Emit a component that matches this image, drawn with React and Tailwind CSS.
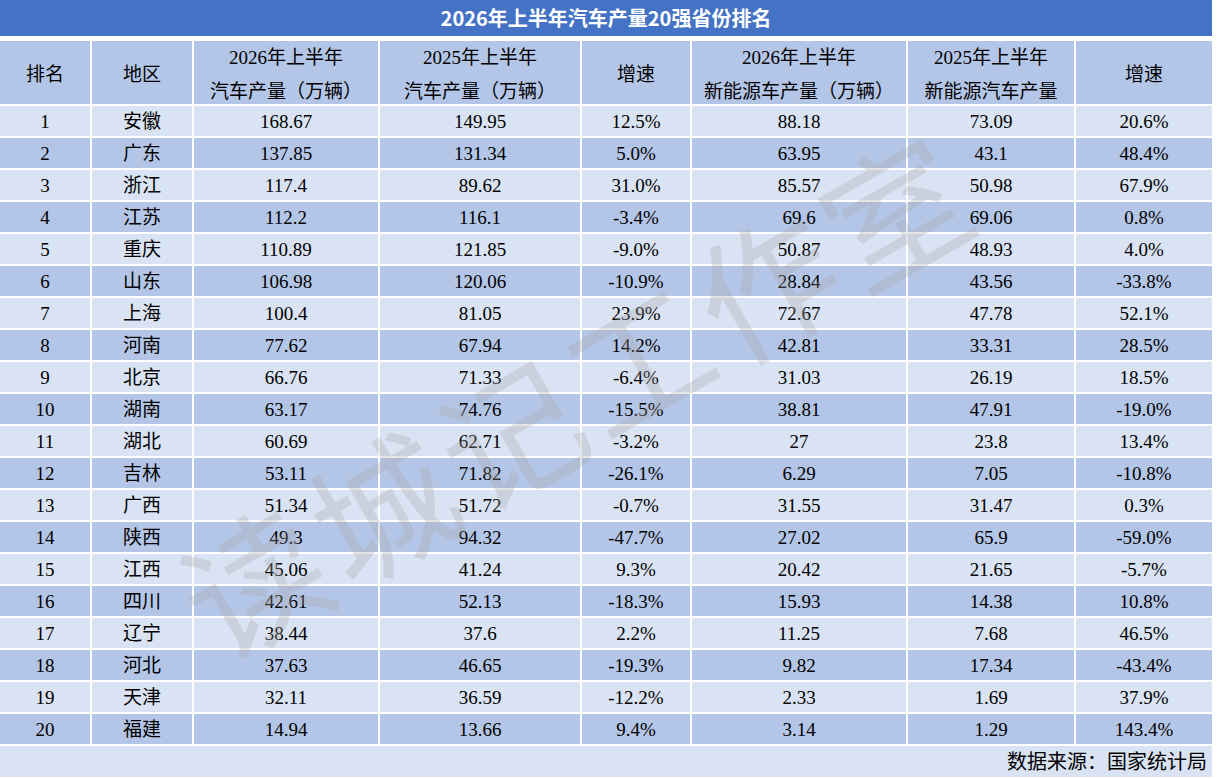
import React from "react";

const rows = [
  ["1", "安徽", "168.67", "149.95", "12.5%", "88.18", "73.09", "20.6%"],
  ["2", "广东", "137.85", "131.34", "5.0%", "63.95", "43.1", "48.4%"],
  ["3", "浙江", "117.4", "89.62", "31.0%", "85.57", "50.98", "67.9%"],
  ["4", "江苏", "112.2", "116.1", "-3.4%", "69.6", "69.06", "0.8%"],
  ["5", "重庆", "110.89", "121.85", "-9.0%", "50.87", "48.93", "4.0%"],
  ["6", "山东", "106.98", "120.06", "-10.9%", "28.84", "43.56", "-33.8%"],
  ["7", "上海", "100.4", "81.05", "23.9%", "72.67", "47.78", "52.1%"],
  ["8", "河南", "77.62", "67.94", "14.2%", "42.81", "33.31", "28.5%"],
  ["9", "北京", "66.76", "71.33", "-6.4%", "31.03", "26.19", "18.5%"],
  ["10", "湖南", "63.17", "74.76", "-15.5%", "38.81", "47.91", "-19.0%"],
  ["11", "湖北", "60.69", "62.71", "-3.2%", "27", "23.8", "13.4%"],
  ["12", "吉林", "53.11", "71.82", "-26.1%", "6.29", "7.05", "-10.8%"],
  ["13", "广西", "51.34", "51.72", "-0.7%", "31.55", "31.47", "0.3%"],
  ["14", "陕西", "49.3", "94.32", "-47.7%", "27.02", "65.9", "-59.0%"],
  ["15", "江西", "45.06", "41.24", "9.3%", "20.42", "21.65", "-5.7%"],
  ["16", "四川", "42.61", "52.13", "-18.3%", "15.93", "14.38", "10.8%"],
  ["17", "辽宁", "38.44", "37.6", "2.2%", "11.25", "7.68", "46.5%"],
  ["18", "河北", "37.63", "46.65", "-19.3%", "9.82", "17.34", "-43.4%"],
  ["19", "天津", "32.11", "36.59", "-12.2%", "2.33", "1.69", "37.9%"],
  ["20", "福建", "14.94", "13.66", "9.4%", "3.14", "1.29", "143.4%"],
];

const headers = [
  ["排名"],
  ["地区"],
  ["2026年上半年", "汽车产量（万辆）"],
  ["2025年上半年", "汽车产量（万辆）"],
  ["增速"],
  ["2026年上半年", "新能源车产量（万辆）"],
  ["2025年上半年", "新能源汽车产量"],
  ["增速"],
];

const serif = {
  fontFamily: '"Liberation Serif", "Noto Sans CJK SC", serif',
};

export default function App() {
  return (
    <div className="relative w-[1218px] h-[778px] bg-white overflow-hidden">
      <div
        className="w-[1212px] flex flex-col text-[19px] text-black"
        style={serif}
      >
        <div
          className="h-[36px] bg-[#4472c4] flex items-center justify-center text-white font-bold text-[20px]"
          style={{ fontFamily: '"Noto Sans CJK SC", "Noto Sans", sans-serif' }}
        >
          2026年上半年汽车产量20强省份排名
        </div>
        <div className="mt-[5px] grid grid-cols-[90px_100px_184px_200px_108px_214px_166px_136px] gap-[2px]">
          {headers.map((h, i) => (
            <div
              key={"h" + i}
              className="h-[63px] bg-[#b4c6e7] flex flex-col items-center justify-center pt-[5px] gap-[4px] whitespace-nowrap"
            >
              {h.map((line, j) => (
                <div key={j} className="leading-[30px]">
                  {line}
                </div>
              ))}
            </div>
          ))}
          {rows.map((r, ri) =>
            r.map((c, ci) => (
              <div
                key={ri + "-" + ci}
                className={
                  "h-[30px] flex items-center justify-center leading-none " +
                  (ri % 2 === 0 ? "bg-[#dae3f3]" : "bg-[#b4c6e7]")
                }
              >
                {c}
              </div>
            ))
          )}
        </div>
        <div className="mt-[2px] h-[31px] bg-[#dae3f3] flex items-center justify-end pr-[5px] text-[20px] leading-none">
          数据来源：国家统计局
        </div>
      </div>
      <div className="pointer-events-none absolute left-[575px] top-[390px] -translate-x-1/2 -translate-y-1/2 -rotate-[30deg] whitespace-nowrap">
        <span
          className="text-[140px] tracking-[8px] text-[#a8a8a8] opacity-30 font-normal"
          style={{ fontFamily: '"Noto Sans CJK SC", sans-serif' }}
        >
          读城记工作室
        </span>
      </div>
    </div>
  );
}
